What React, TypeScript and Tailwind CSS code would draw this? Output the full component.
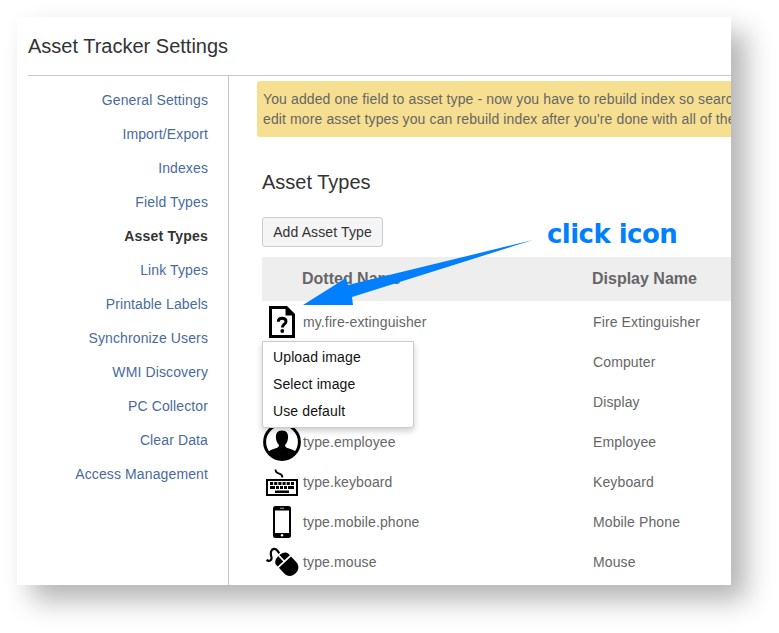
const links = [
  "General Settings",
  "Import/Export",
  "Indexes",
  "Field Types",
  "Asset Types",
  "Link Types",
  "Printable Labels",
  "Synchronize Users",
  "WMI Discovery",
  "PC Collector",
  "Clear Data",
  "Access Management",
];

function QuestionFile() {
  return (
    <svg width="26" height="32" viewBox="0 0 26 32" className="ml-[7px]">
      <path d="M0 0H18L26 8V32H0Z" />
      <path d="M3 3H16.5V9.5H23V29H3Z" fill="#fff" />
      <path d="M9.3 15.8C9.3 13 11 12.2 13 12.2C15.6 12.2 17 13.5 17 15.4C17 18.2 13.3 18 13.3 21.6" fill="none" stroke="#000" strokeWidth="2.9" />
      <circle cx="13.3" cy="25" r="1.9" />
    </svg>
  );
}

function Employee() {
  return (
    <svg width="38" height="38" viewBox="0 0 38 38" className="ml-px">
      <circle cx="19" cy="19" r="17.4" fill="#fff" stroke="#000" strokeWidth="3" />
      <path d="M19 7.5C23.5 7.5 25.5 10.5 25 15C24.8 18.5 23.5 20.5 22 22C22 25 25 25 30 27C31.5 27.6 32 28.3 32.5 29C28 35 24 36.5 19 36.5S10 35 5.5 29C6 28.3 6.5 27.6 8 27C13 25 16 25 16 22C14.5 20.5 13.2 18.5 13 15C12.5 10.5 14.5 7.5 19 7.5Z" />
    </svg>
  );
}

function Keyboard() {
  return (
    <svg width="32" height="28" viewBox="0 0 32 28" className="ml-1 mt-0.5">
      <path d="M9.5 .5C9.5 7 17 2.5 16.3 8.5" fill="none" stroke="#000" strokeWidth="1.8" />
      <path d="M0 10H32V27H0Z" />
      <path d="M2 12H30V25H2Z" fill="#fff" />
      <path d="M4 14.5H28" stroke="#000" strokeWidth="3" strokeDasharray="3.1 1.08" />
      <path d="M4 18.5H28" stroke="#000" strokeWidth="3" strokeDasharray="5 1 3 1 3 1 3 1 6" />
      <path d="M9 21.5H23V24H9Z" />
    </svg>
  );
}

function Phone() {
  return (
    <svg width="18" height="32" viewBox="0 0 18 32" className="ml-[11px]">
      <rect width="18" height="32" rx="2.5" />
      <path d="M2 4.5H16V27H2Z" fill="#fff" />
      <path d="M7 2.2H11" stroke="#fff" strokeWidth=".7" />
      <circle cx="9" cy="29.3" r="1.2" fill="#fff" />
    </svg>
  );
}

function Mouse() {
  return (
    <svg width="33" height="30" viewBox="0 0 33 30" className="ml-1">
      <path d="M.5 13C3 14.5 6.5 14 5.3 9.5C4 5 5.5 2 8 1.8C11 1.5 11.5 4 13.3 6.3" fill="none" stroke="#000" strokeWidth="2.2" />
      <g transform="translate(20.7 17) rotate(-43)">
        <path d="M-8.3 -2.5H8.3V5C8.3 15.5 -8.3 15.5 -8.3 5Z" />
        <path d="M-8.3 -4.3V-6C-8.3 -9.5 -5 -11.5 -.8 -11.5V-4.3ZM.8 -11.5C5 -11.5 8.3 -9.5 8.3 -6V-4.3H.8Z" />
      </g>
    </svg>
  );
}

const rows = [
  { name: "my.fire-extinguisher", label: "Fire Extinguisher", icon: <QuestionFile /> },
  { name: "", label: "Computer", icon: null },
  { name: "", label: "Display", icon: null },
  { name: "type.employee", label: "Employee", icon: <Employee /> },
  { name: "type.keyboard", label: "Keyboard", icon: <Keyboard /> },
  { name: "type.mobile.phone", label: "Mobile Phone", icon: <Phone /> },
  { name: "type.mouse", label: "Mouse", icon: <Mouse /> },
];

export default function App() {
  return (
    <div className="h-[633px] w-[779px] overflow-hidden bg-white p-[17px] font-['Liberation_Sans',Arial,sans-serif] text-[14px] tracking-[0.12px] text-[#666]">
      <div className="relative h-[568px] w-[714px] bg-white shadow-[15px_15px_26px_rgba(0,0,0,0.3)]">
        <div className="flex h-full flex-col overflow-hidden pl-[11px]">
          <header className="flex h-[59px] shrink-0 items-center border-b border-[#c8c8c8]">
            <h1 className="text-[20px] tracking-normal text-[#333]">Asset Tracker Settings</h1>
          </header>
          <div className="flex min-h-0 flex-1">
            <nav className="flex w-[201px] shrink-0 flex-col border-r border-[#c8c8c8] pt-[7px] pr-5">
              {links.map((label) => (
                <a
                  key={label}
                  className={
                    label === "Asset Types"
                      ? "flex h-[34px] items-center justify-end font-bold tracking-[0.22px] text-[#333]"
                      : "flex h-[34px] items-center justify-end text-[#4a6b9c]"
                  }
                >
                  {label}
                </a>
              ))}
            </nav>
            <main className="flex w-[502px] shrink-0 flex-col pt-[5px]">
              <div className="ml-7 h-14 overflow-hidden rounded-l-[3px] bg-[#f6df90] pt-2 pl-1.5 leading-5 whitespace-nowrap">
                <p>You added one field to asset type - now you have to rebuild index so searc</p>
                <p>edit more asset types you can rebuild index after you're done with all of the</p>
              </div>
              <h2 className="mt-[31px] ml-[33px] text-[20px] leading-7 tracking-normal text-[#333]">Asset Types</h2>
              <button className="mt-[21px] ml-[33px] h-[30px] w-[121px] rounded-[3px] border border-[#ccc] bg-[#f5f5f5] whitespace-nowrap text-[#333]">
                Add Asset Type
              </button>
              <div className="mt-2.5 ml-[33px] flex h-11 shrink-0 items-center bg-[#eee] text-[16px] font-bold tracking-normal">
                <span className="w-[290px] pl-10">Dotted Name</span>
                <span className="pl-10">Display Name</span>
              </div>
              <div className="ml-[33px] pt-px">
                {rows.map((r) => (
                  <div key={r.label} className="flex h-10 items-center">
                    <span className="w-[41px] shrink-0">{r.icon}</span>
                    <span className="w-[290px] shrink-0">{r.name}</span>
                    <span>{r.label}</span>
                  </div>
                ))}
              </div>
            </main>
          </div>
        </div>
        <div className="absolute top-[324px] left-[245px] flex h-[87px] w-[152px] flex-col rounded-b-[3px] border border-[#ccc] bg-white pt-0.5 pl-2.5 text-[#111] shadow-[0_3px_6px_rgba(0,0,0,0.2)]">
          <span className="leading-[27px]">Upload image</span>
          <span className="leading-[27px]">Select image</span>
          <span className="leading-[27px]">Use default</span>
        </div>
        <svg className="absolute top-[222px] left-[286px]" width="230" height="68" viewBox="0 0 230 68">
          <path d="M0 66L43 39L45 46L230 1L49 58L50 66Z" fill="#007fff" />
        </svg>
        <span className="absolute top-[201px] left-[530px] font-['DejaVu_Sans',sans-serif] text-[26px] leading-8 font-bold tracking-[-0.55px] whitespace-nowrap text-[#007fff]">
          click icon
        </span>
      </div>
    </div>
  );
}
